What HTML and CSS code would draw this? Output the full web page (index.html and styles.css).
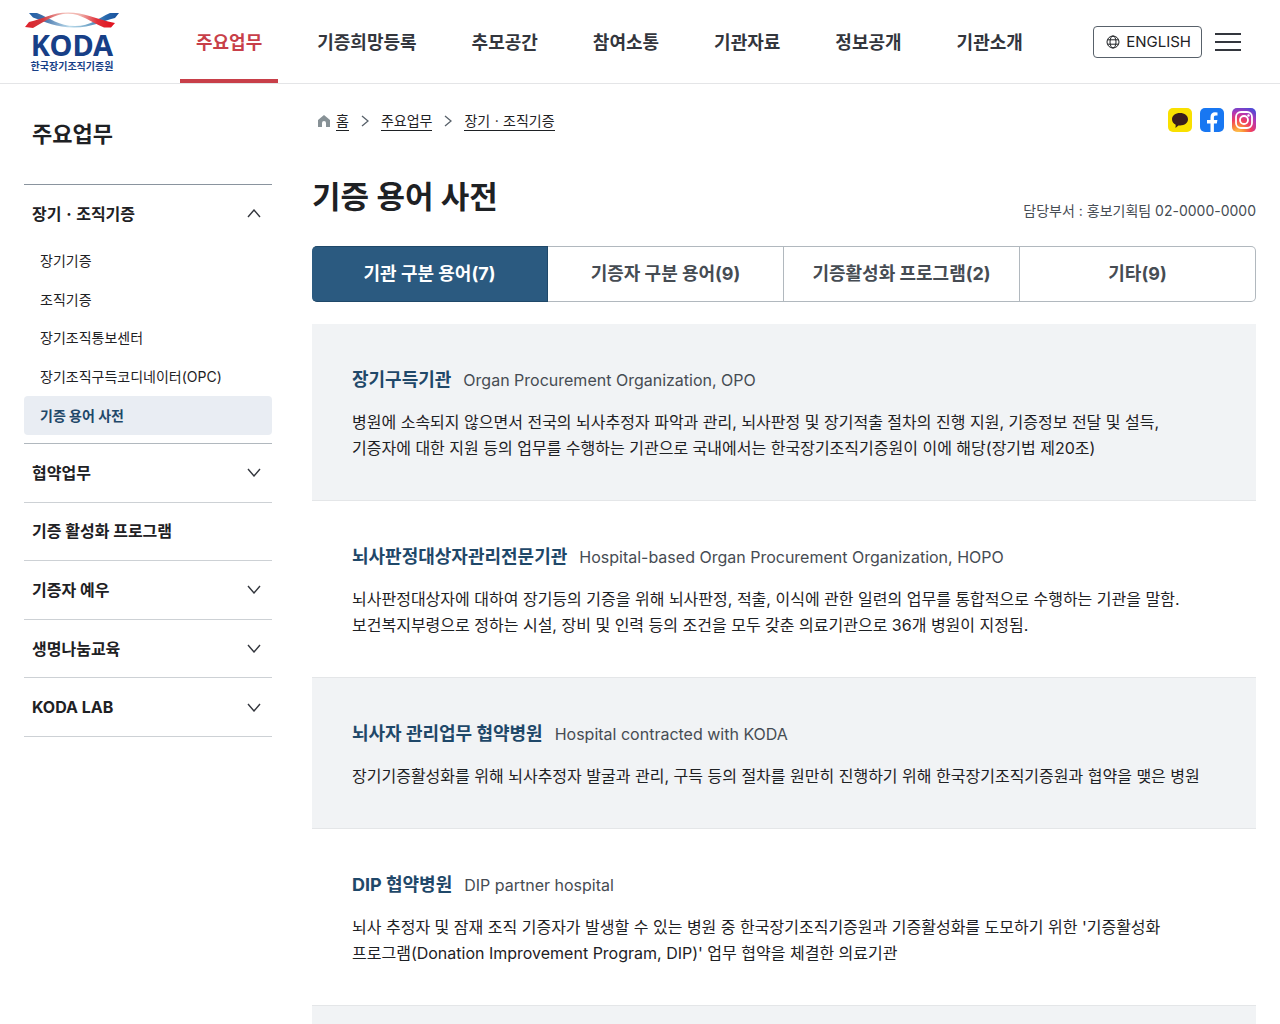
FILE: index.html
```html
<!DOCTYPE html>
<html lang="ko">
<head>
<meta charset="utf-8">
<meta name="viewport" content="width=device-width, initial-scale=1">
<title>기증 용어 사전 | 한국장기조직기증원</title>
<link rel="stylesheet" href="styles.css">
</head>
<body>
<header class="header">
  <a class="logo" href="#" aria-label="KODA 한국장기조직기증원">
    <svg class="logo-mark" viewBox="0 0 96 18" aria-hidden="true">
      <defs>
        <linearGradient id="red" x1="0" x2="1"><stop offset="0" stop-color="#e0202a"/><stop offset=".2" stop-color="#d03a40"/><stop offset=".45" stop-color="#f5c4be"/><stop offset=".62" stop-color="#f0b0aa"/><stop offset=".8" stop-color="#e0303a"/><stop offset="1" stop-color="#e0101c"/></linearGradient>
        <linearGradient id="blue" x1="0" x2="1"><stop offset="0" stop-color="#1f5fa8"/><stop offset=".15" stop-color="#3f6ea8"/><stop offset=".45" stop-color="#bcdcec"/><stop offset=".65" stop-color="#78aacb"/><stop offset=".85" stop-color="#2869ad"/><stop offset="1" stop-color="#174f9c"/></linearGradient>
      </defs>
      <path fill="url(#blue)" d="M5 1h8c13 5 22 13 38 13S74 6 86 1h9l-4 5C78 9 68 15.500 50 15.500S22 10 9 5.500z"/>
      <path fill="url(#red)" d="M1 15l4-5C19 7 28 .5 44 .5S72 7 91 11l-4 4.500h-7C66 10 58 1.800 44 1.800S22 9 9 16z"/>
    </svg>
    <span class="logo-name">KODA</span>
    <span class="logo-sub">한국장기조직기증원</span>
  </a>
  <nav class="gnb" aria-label="주메뉴">
    <a class="gnb-link is-active" href="#">주요업무</a>
    <a class="gnb-link" href="#">기증희망등록</a>
    <a class="gnb-link" href="#">추모공간</a>
    <a class="gnb-link" href="#">참여소통</a>
    <a class="gnb-link" href="#">기관자료</a>
    <a class="gnb-link" href="#">정보공개</a>
    <a class="gnb-link" href="#">기관소개</a>
  </nav>
  <div class="tools">
    <a class="lang" href="#">
      <svg width="14" height="14" viewBox="0 0 14 14" fill="none" stroke="currentColor" aria-hidden="true"><circle cx="7" cy="7" r="6"/><ellipse cx="7" cy="7" rx="3" ry="6"/><path d="M1.5 4.8h11M1.5 9.2h11"/></svg>
      ENGLISH
    </a>
    <button class="menu-button" type="button" aria-label="전체메뉴">
      <svg width="26" height="20" viewBox="0 0 26 20" stroke="currentColor" stroke-width="2" aria-hidden="true"><path d="M0 2h26M0 10h26M0 18h26"/></svg>
    </button>
  </div>
</header>

<div class="page">
  <aside class="side">
    <h2 class="side-title">주요업무</h2>
    <div class="side-open">
      <button class="side-item" type="button" aria-expanded="true">장기ㆍ조직기증
        <svg class="chevron" viewBox="0 0 14 9" aria-hidden="true"><path d="M1 8l6-7 6 7"/></svg>
      </button>
      <ul class="side-sub">
        <li><a href="#">장기기증</a></li>
        <li><a href="#">조직기증</a></li>
        <li><a href="#">장기조직통보센터</a></li>
        <li><a href="#">장기조직구득코디네이터(OPC)</a></li>
        <li><a class="is-current" href="#" aria-current="page">기증 용어 사전</a></li>
      </ul>
    </div>
    <ul class="side-list">
      <li><button class="side-item" type="button">협약업무 <svg class="chevron" viewBox="0 0 14 9" aria-hidden="true"><path d="M1 1l6 7 6-7"/></svg></button></li>
      <li><a class="side-item" href="#">기증 활성화 프로그램</a></li>
      <li><button class="side-item" type="button">기증자 예우 <svg class="chevron" viewBox="0 0 14 9" aria-hidden="true"><path d="M1 1l6 7 6-7"/></svg></button></li>
      <li><button class="side-item" type="button">생명나눔교육 <svg class="chevron" viewBox="0 0 14 9" aria-hidden="true"><path d="M1 1l6 7 6-7"/></svg></button></li>
      <li><button class="side-item" type="button">KODA LAB <svg class="chevron" viewBox="0 0 14 9" aria-hidden="true"><path d="M1 1l6 7 6-7"/></svg></button></li>
    </ul>
  </aside>

  <main class="main">
    <div class="topline">
      <nav class="crumbs" aria-label="현재 위치">
        <svg class="home" width="12" height="12" viewBox="0 0 12 12" aria-hidden="true"><path fill="#879196" d="M6 0l6 5v7H8V8a2 2 0 0 0-4 0v4H0V5z"/></svg>
        <a href="#">홈</a>
        <svg class="crumb-arrow" viewBox="0 0 8 12" aria-hidden="true"><path d="M1 1l6 5-6 5"/></svg>
        <a href="#">주요업무</a>
        <svg class="crumb-arrow" viewBox="0 0 8 12" aria-hidden="true"><path d="M1 1l6 5-6 5"/></svg>
        <a href="#">장기ㆍ조직기증</a>
      </nav>
      <div class="social">
        <a href="#" aria-label="카카오톡 채널"><svg width="24" height="24" viewBox="0 0 24 24"><rect width="24" height="24" rx="5" fill="#f9e000"/><path fill="#3a1d1d" d="M12 5c4.600 0 8 2.700 8 6.300s-3.400 6.200-8 6.200l-1.600-.1L7.500 20l.2-3.300C5.400 15.700 4 13.700 4 11.300 4 7.700 7.400 5 12 5z"/></svg></a>
        <a href="#" aria-label="페이스북"><svg width="24" height="24" viewBox="0 0 24 24"><rect width="24" height="24" rx="5" fill="#1877f2"/><path fill="#fff" d="M10.500 24v-8.500H7V12h3.500V9.300C10.500 6 12.300 4.300 15 4.300l2.500.2v3.100h-1.600c-1.600 0-2 .8-2 1.900V12h3.500l-.6 3.500h-2.900V24z"/></svg></a>
        <a href="#" aria-label="인스타그램"><svg width="24" height="24" viewBox="0 0 24 24"><defs><radialGradient id="insta" cx=".25" cy="1.05" r="1.150"><stop offset="0" stop-color="#fed053"/><stop offset=".25" stop-color="#fb8a38"/><stop offset=".5" stop-color="#ef3b62"/><stop offset=".75" stop-color="#b436b4"/><stop offset="1" stop-color="#5149d6"/></radialGradient></defs><rect width="24" height="24" rx="5" fill="url(#insta)"/><g fill="none" stroke="#fff" stroke-width="1.800"><rect x="4" y="4" width="16" height="16" rx="5"/><circle cx="12" cy="12" r="4"/></g><circle cx="16.500" cy="7.500" r="1.200" fill="#fff"/></svg></a>
      </div>
    </div>

    <div class="heading">
      <h1>기증 용어 사전</h1>
      <p>담당부서 : 홍보기획팀 02-0000-0000</p>
    </div>

    <div class="tabs" role="tablist">
      <button class="tab is-selected" type="button" role="tab" aria-selected="true">기관 구분 용어(7)</button>
      <button class="tab" type="button" role="tab" aria-selected="false">기증자 구분 용어(9)</button>
      <button class="tab" type="button" role="tab" aria-selected="false">기증활성화 프로그램(2)</button>
      <button class="tab" type="button" role="tab" aria-selected="false">기타(9)</button>
    </div>

    <div class="terms">
      <section class="term">
        <h3>장기구득기관 <span>Organ Procurement Organization, OPO</span></h3>
        <p>병원에 소속되지 않으면서 전국의 뇌사추정자 파악과 관리, 뇌사판정 및 장기적출 절차의 진행 지원, 기증정보 전달 및 설득,<br>기증자에 대한 지원 등의 업무를 수행하는 기관으로 국내에서는 한국장기조직기증원이 이에 해당(장기법 제20조)</p>
      </section>
      <section class="term">
        <h3>뇌사판정대상자관리전문기관 <span>Hospital-based Organ Procurement Organization, HOPO</span></h3>
        <p>뇌사판정대상자에 대하여 장기등의 기증을 위해 뇌사판정, 적출, 이식에 관한 일련의 업무를 통합적으로 수행하는 기관을 말함.<br>보건복지부령으로 정하는 시설, 장비 및 인력 등의 조건을 모두 갖춘 의료기관으로 36개 병원이 지정됨.</p>
      </section>
      <section class="term">
        <h3>뇌사자 관리업무 협약병원 <span>Hospital contracted with KODA</span></h3>
        <p>장기기증활성화를 위해 뇌사추정자 발굴과 관리, 구득 등의 절차를 원만히 진행하기 위해 한국장기조직기증원과 협약을 맺은 병원</p>
      </section>
      <section class="term">
        <h3>DIP 협약병원 <span>DIP partner hospital</span></h3>
        <p>뇌사 추정자 및 잠재 조직 기증자가 발생할 수 있는 병원 중 한국장기조직기증원과 기증활성화를 도모하기 위한 '기증활성화<br>프로그램(Donation Improvement Program, DIP)' 업무 협약을 체결한 의료기관</p>
      </section>
      <div class="terms-end"></div>
    </div>
  </main>
</div>
</body>
</html>
```
FILE: styles.css
```css
* { box-sizing: border-box; }
body {
  margin: 0;
  background: #fff;
  color: #1e2124;
  font: 16px/26px Inter, "Noto Sans CJK KR", sans-serif;
  word-break: keep-all;
}
a { color: inherit; text-decoration: none; }
button { margin: 0; padding: 0; border: 0; background: none; color: inherit; font: inherit; }
h1, h2, h3, p, ul { margin: 0; padding: 0; }
ul { list-style: none; }
svg { display: block; flex: none; }

.header {
  display: flex;
  align-items: stretch;
  height: 84px;
  padding: 0 39px 0 24px;
  border-bottom: 1px solid #e4e5e7;
}
.logo {
  display: flex;
  flex-direction: column;
  align-items: center;
  width: 96px;
  margin-right: 60px;
  padding-top: 12px;
  color: #173f87;
}
.logo-mark { width: 96px; height: 18px; }
.logo-name { font: 700 29px/30px "Noto Sans", sans-serif; }
.logo-sub { font: 700 10px/12px "Noto Sans CJK KR", sans-serif; white-space: nowrap; }
.gnb { display: flex; gap: 23px; }
.gnb-link {
  display: flex;
  align-items: center;
  padding: 6px 16px 0;
  border-bottom: 4px solid transparent;
  color: #33363d;
  font-size: 18px;
  font-weight: 700;
  white-space: nowrap;
}
.gnb-link.is-active { border-color: #c83f49; color: #c83f49; }
.tools { display: flex; align-items: center; gap: 13px; margin-left: auto; }
.lang {
  display: flex;
  align-items: center;
  gap: 6px;
  height: 32px;
  padding: 0 10px 0 12px;
  border: 1px solid #58616a;
  border-radius: 4px;
  font-size: 15px;
}
.menu-button { color: #33363d; }

.page { display: flex; gap: 40px; padding: 0 24px; }
.side { flex: none; width: 248px; }
.side-title { padding: 34px 8px; font-size: 22px; line-height: 32px; font-weight: 700; }
.side-open { border-top: 1px solid #8a949e; border-bottom: 1px solid #b1b8be; padding-bottom: 8px; }
.side-item {
  display: flex;
  align-items: center;
  justify-content: space-between;
  width: 100%;
  height: 100%;
  min-height: 57px;
  padding: 0 11px 0 8px;
  font-weight: 700;
  text-align: left;
}
.chevron { width: 14px; height: 9px; fill: none; stroke: #33363d; stroke-width: 1.4; }
.side-sub { display: grid; grid-auto-rows: 1fr; min-height: 193px; font-size: 14px; }
.side-sub a { display: flex; align-items: center; height: 100%; padding: 0 16px; border-radius: 4px; }
.side-sub .is-current { background: #e9edf3; color: #1f4869; font-weight: 700; }
.side-list { display: grid; grid-auto-rows: 1fr; min-height: 293px; }
.side-list li { border-bottom: 1px solid #cdd1d5; }

.main { flex: 1; min-width: 0; }
.topline { display: flex; align-items: center; justify-content: space-between; height: 72px; padding-left: 6px; }
.crumbs { display: flex; align-items: center; padding-top: 2px; font-size: 14px; line-height: 18px; }
.crumbs a { border-bottom: 1px solid #1e2124; }
.home { margin-right: 6px; }
.crumb-arrow { width: 8px; height: 12px; margin: 0 12px; fill: none; stroke: #58616a; stroke-width: 1.3; }
.social { display: flex; gap: 8px; }
.heading { display: flex; justify-content: space-between; align-items: flex-end; height: 68px; }
.heading h1 { font-size: 31px; line-height: 54px; font-weight: 700; }
.heading p { color: #464c53; font-size: 14px; line-height: 26px; }

.tabs { display: flex; margin: 22px 0; }
.tab {
  flex: 1;
  height: 56px;
  border: 1px solid #b1b8be;
  border-left-width: 0;
  color: #464c53;
  font-size: 18px;
  font-weight: 700;
}
.tab:last-child { border-radius: 0 5px 5px 0; }
.tab.is-selected { border-color: #1f4869; border-radius: 5px 0 0 5px; background: #2b5a80; color: #fff; }

.term { padding: 40px 40px 39px; border-bottom: 1px solid #e4e6e8; }
.term:nth-child(odd) { background: #f1f3f5; }
.term h3 { display: flex; gap: 12px; margin-bottom: 13px; color: #1f4869; font-size: 18px; line-height: 32px; font-weight: 700; }
.term h3 span { color: #464c53; font-size: 16px; font-weight: 400; }
.terms-end { height: 18px; background: #f1f3f5; }
```
